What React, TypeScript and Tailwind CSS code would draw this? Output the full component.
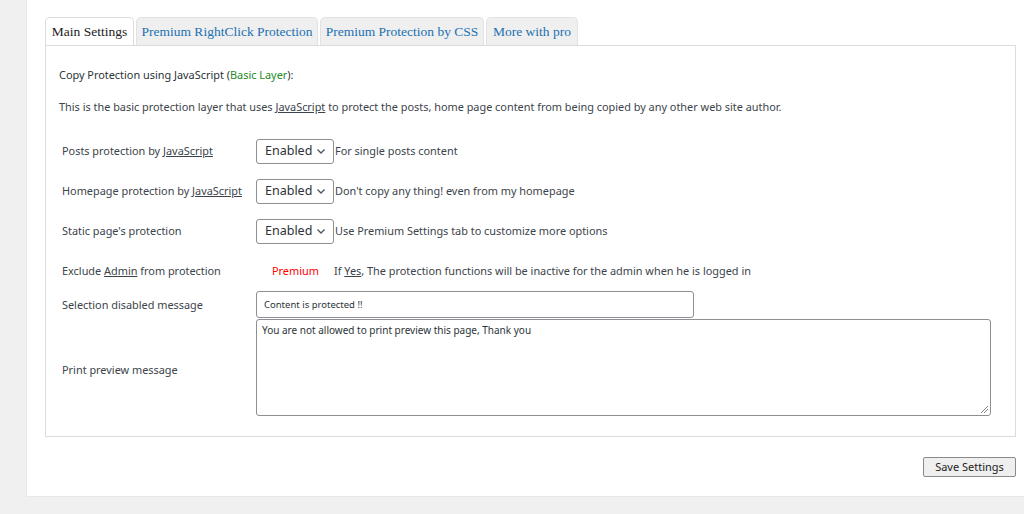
import type { ReactNode } from "react";

const SANS = "font-['Noto_Sans','Open_Sans',sans-serif]";

const TABS = [
  { label: "Main Settings", active: true, w: "w-[89px]" },
  { label: "Premium RightClick Protection", active: false, w: "w-[182px]" },
  { label: "Premium Protection by CSS", active: false, w: "w-[164px]" },
  { label: "More with pro", active: false, w: "w-[92px]" },
];

function SelectBox() {
  return (
    <div className="flex h-[25px] w-[78px] items-center justify-between rounded-[3px] border border-[#8c8f94] bg-white pl-[8px] pr-[6px] text-[12.5px] text-[#2c3338]">
      <span>Enabled</span>
      <svg width="12" height="12" viewBox="0 0 12 12" fill="none" stroke="#50575e" strokeWidth="1.4">
        <path d="M2.5 4.5 L6 8 L9.5 4.5" />
      </svg>
    </div>
  );
}

function Row({ label, children, h = "h-[40px]" }: { label: ReactNode; children: ReactNode; h?: string }) {
  return (
    <div className={`flex items-center ${h}`}>
      <div className="w-[197px] whitespace-nowrap pl-[3px]">{label}</div>
      <div className="flex flex-1 items-center whitespace-nowrap">{children}</div>
    </div>
  );
}

export default function App() {
  return (
    <div className={`min-h-[514px] w-[1024px] overflow-hidden bg-[#f0f0f1] ${SANS} text-[10.9px] leading-[16px] text-[#3c434a]`}>
      <div className="ml-[26px] h-[497px] border-b border-l border-[#ece6e8] bg-white pl-[18px] pr-[8px] pt-[17px]">
        {/* Tabs */}
        <div className="flex gap-[2px] font-['Georgia','Liberation_Serif',serif] text-[13.5px]">
          {TABS.map((t) => (
            <div
              key={t.label}
              className={`flex h-[28px] items-center justify-center rounded-t-[5px] border border-b-0 ${t.w} ${
                t.active
                  ? "relative z-10 -mb-px h-[28px] border-[#dcdcde] bg-white text-[#222]"
                  : "border-[#e2e2e4] bg-[#efeff0] text-[#2271b1]"
              }`}
            >
              {t.label}
            </div>
          ))}
        </div>

        {/* Content box */}
        <div className="h-[392px] border border-[#dcdcde] bg-white px-[13px]">
          <p className="mt-[21px] text-[#2c3338]">
            Copy Protection using JavaScript (<span className="text-[#248a24]">Basic Layer</span>):
          </p>
          <p className="mt-[16px]">
            This is the basic protection layer that uses <span className="underline">JavaScript</span> to protect the posts, home page content from being copied by any other web site author.
          </p>

          <div className="mt-[16px]">
            <Row label={<>Posts protection by <span className="underline">JavaScript</span></>}>
              <SelectBox />
              <span className="ml-px">For single posts content</span>
            </Row>
            <Row label={<>Homepage protection by <span className="underline">JavaScript</span></>}>
              <SelectBox />
              <span className="ml-px">Don't copy any thing! even from my homepage</span>
            </Row>
            <Row label="Static page's protection">
              <SelectBox />
              <span className="ml-px">Use Premium Settings tab to customize more options</span>
            </Row>
            <Row label={<>Exclude <span className="underline">Admin</span> from protection</>}>
              <span className="ml-[16px] w-[62px] text-[#f00]">Premium</span>
              <span>
                If <span className="underline">Yes</span>, The protection functions will be inactive for the admin when he is logged in
              </span>
            </Row>
            <Row label="Selection disabled message" h="h-[27px]">
              <div className="flex h-[27px] w-[438px] items-center rounded-[3px] border border-[#8c8f94] px-[7px] text-[9.5px] text-[#2c3338]">
                Content is protected !!
              </div>
            </Row>
            <Row label={<span className="block pt-[4px]">Print preview message</span>} h="h-[97px] mt-[1px]">
              <div className="relative h-[97px] w-[735px] rounded-[3px] border border-[#8c8f94] px-[5px] pt-[3px] text-[10px] leading-[14px] text-[#2c3338]">
                You are not allowed to print preview this page, Thank you
                <svg className="absolute bottom-[2px] right-[2px]" width="8" height="8" viewBox="0 0 8 8" stroke="#888" strokeWidth="1">
                  <path d="M1 8 L8 1 M4 8 L8 4" />
                </svg>
              </div>
            </Row>
          </div>
        </div>

        <div className="flex justify-end pt-[20px]">
          <button className="h-[20px] w-[93px] rounded-[2px] border border-[#8a8a8a] bg-[#efefef] text-[11px] text-[#222]">
            Save Settings
          </button>
        </div>
      </div>
    </div>
  );
}
